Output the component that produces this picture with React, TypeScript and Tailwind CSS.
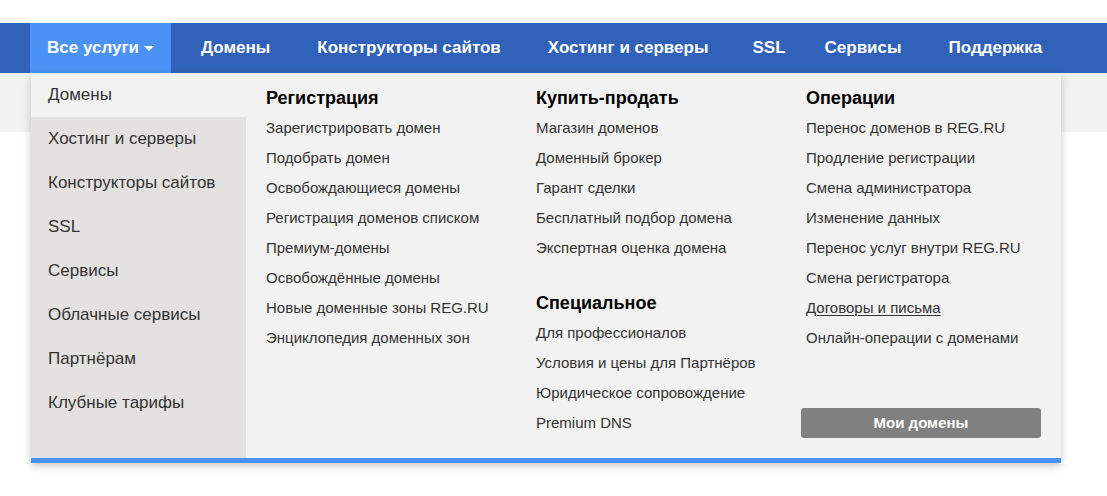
const navItems = [
  { label: "Домены", gap: "ml-[30px]" },
  { label: "Конструкторы сайтов", gap: "ml-[47px]" },
  { label: "Хостинг и серверы", gap: "ml-[47px]" },
  { label: "SSL", gap: "ml-[44px]" },
  { label: "Сервисы", gap: "ml-[39px]" },
  { label: "Поддержка", gap: "ml-[47px]" },
];

const sideItems = [
  "Домены",
  "Хостинг и серверы",
  "Конструкторы сайтов",
  "SSL",
  "Сервисы",
  "Облачные сервисы",
  "Партнёрам",
  "Клубные тарифы",
];

type Group = { title: string; links: string[] };

const registration: Group = {
  title: "Регистрация",
  links: [
    "Зарегистрировать домен",
    "Подобрать домен",
    "Освобождающиеся домены",
    "Регистрация доменов списком",
    "Премиум-домены",
    "Освобождённые домены",
    "Новые доменные зоны REG.RU",
    "Энциклопедия доменных зон",
  ],
};

const trade: Group = {
  title: "Купить-продать",
  links: [
    "Магазин доменов",
    "Доменный брокер",
    "Гарант сделки",
    "Бесплатный подбор домена",
    "Экспертная оценка домена",
  ],
};

const special: Group = {
  title: "Специальное",
  links: ["Для профессионалов", "Условия и цены для Партнёров", "Юридическое сопровождение", "Premium DNS"],
};

const operations: Group = {
  title: "Операции",
  links: [
    "Перенос доменов в REG.RU",
    "Продление регистрации",
    "Смена администратора",
    "Изменение данных",
    "Перенос услуг внутри REG.RU",
    "Смена регистратора",
    "Договоры и письма",
    "Онлайн-операции с доменами",
  ],
};

function LinkGroup({ group }: { group: Group }) {
  return (
    <div>
      <h3 className="text-[18px] leading-[22px] font-bold text-black mb-[4px]">{group.title}</h3>
      <ul>
        {group.links.map((l) => (
          <li key={l} className="text-[15px] leading-[30px] text-[#333]">
            <a className={l === "Договоры и письма" ? "underline underline-offset-2" : ""}>{l}</a>
          </li>
        ))}
      </ul>
    </div>
  );
}

export default function App() {
  return (
    <div className="min-h-screen bg-white pt-[23px] font-['Liberation_Sans',Arial,sans-serif]">
      {/* top navigation */}
      <nav className="h-[50px] bg-[#3162b9] flex items-stretch pl-[30px]">
        <div className="bg-[#4a92f4] flex items-center px-[17px] text-white font-bold text-[17px]">
          Все услуги
          <span className="ml-[5px] inline-block w-0 h-0 border-l-[5px] border-r-[5px] border-t-[5px] border-l-transparent border-r-transparent border-t-white" />
        </div>
        {navItems.map((n) => (
          <div key={n.label} className={`flex items-center text-white font-bold text-[17px] ${n.gap}`}>
            {n.label}
          </div>
        ))}
      </nav>

      <div className="relative">
        <div className="h-[59px] bg-[#f2f2f2]" />

        {/* services dropdown */}
        <div className="absolute left-[31px] top-0 w-[1030px] flex bg-[#f2f2f2] border-b-[5px] border-[#4a92f4] shadow-[0_3px_8px_rgba(0,0,0,0.22)]">
          <ul className="w-[215px] bg-[#e3e2e0]">
            {sideItems.map((s, i) => (
              <li
                key={s}
                className={`h-[44px] flex items-center pl-[17px] text-[17px] text-[#333] ${i === 0 ? "bg-[#f2f2f2]" : ""}`}
              >
                {s}
              </li>
            ))}
          </ul>

          <div className="flex-1 flex pl-[20px] pt-[14px] pb-[20px]">
            <div className="w-[270px]">
              <LinkGroup group={registration} />
            </div>
            <div className="w-[270px]">
              <LinkGroup group={trade} />
              <div className="mt-[29px]">
                <LinkGroup group={special} />
              </div>
            </div>
            <div className="w-[240px] flex flex-col">
              <LinkGroup group={operations} />
              <button className="mt-auto -ml-[5px] w-[240px] h-[30px] rounded-[3px] bg-[#808080] text-white font-bold text-[15px]">
                Мои домены
              </button>
            </div>
          </div>
        </div>
      </div>
    </div>
  );
}
